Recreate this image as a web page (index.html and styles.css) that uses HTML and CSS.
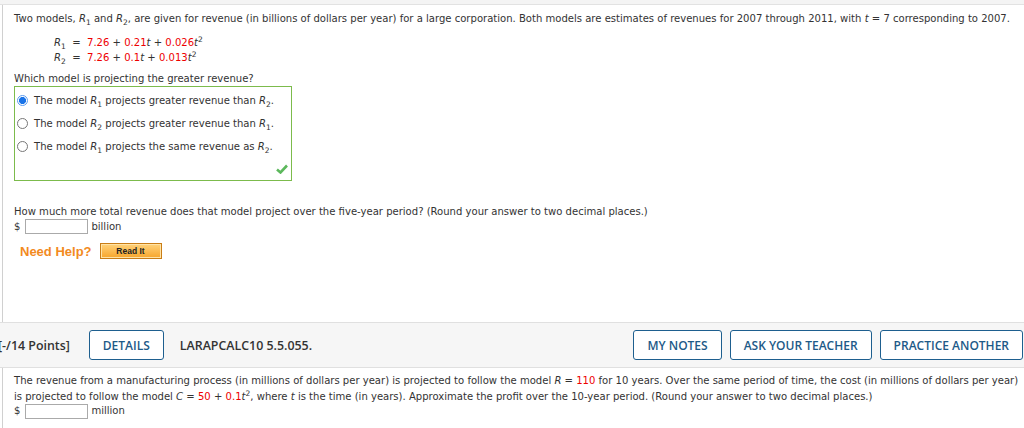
FILE: index.html
```html
<!DOCTYPE html>
<html>
<head>
<meta charset="utf-8">
<link rel="stylesheet" href="styles.css">
</head>
<body>
<div class="topstrip"></div>
<div class="question">
  <p class="intro">Two models, <i>R</i><sub>1</sub> and <i>R</i><sub>2</sub>, are given for revenue (in billions of dollars per year) for a large corporation. Both models are estimates of revenues for 2007 through 2011, with <i>t</i> = 7 corresponding to 2007.</p>
  <div class="eqs">
    <div class="eq"><i>R</i><sub>1</sub> &nbsp;=&nbsp; <span class="red">7.26</span> + <span class="red">0.21</span><i>t</i> + <span class="red">0.026</span><i>t</i><sup>2</sup></div>
    <div class="eq"><i>R</i><sub>2</sub> &nbsp;=&nbsp; <span class="red">7.26</span> + <span class="red">0.1</span><i>t</i> + <span class="red">0.013</span><i>t</i><sup>2</sup></div>
  </div>
  <p class="ask">Which model is projecting the greater revenue?</p>
  <div class="choices">
    <label class="choice"><span class="radio on"></span><span>The model <i>R</i><sub>1</sub> projects greater revenue than <i>R</i><sub>2</sub>.</span></label>
    <label class="choice"><span class="radio"></span><span>The model <i>R</i><sub>2</sub> projects greater revenue than <i>R</i><sub>1</sub>.</span></label>
    <label class="choice"><span class="radio"></span><span>The model <i>R</i><sub>1</sub> projects the same revenue as <i>R</i><sub>2</sub>.</span></label>
    <svg class="check" width="12" height="10" viewBox="0 0 12 10"><path d="M1 5.5 L4.5 8.5 L11 1.5" fill="none" stroke="#5cb85c" stroke-width="2.6"/></svg>
  </div>
  <p class="ask2">How much more total revenue does that model project over the five-year period? (Round your answer to two decimal places.)</p>
  <div class="answer"><span>$</span><span class="input"></span><span>billion</span></div>
  <div class="help"><span class="needhelp">Need Help?</span><span class="readit">Read It</span></div>
</div>
<div class="bar">
  <span class="points">[-/14 Points]</span>
  <span class="btn">DETAILS</span>
  <span class="code">LARAPCALC10 5.5.055.</span>
  <span class="spacer"></span>
  <span class="btn">MY NOTES</span>
  <span class="btn">ASK YOUR TEACHER</span>
  <span class="btn">PRACTICE ANOTHER</span>
</div>
<div class="question q2">
  <p class="intro">The revenue from a manufacturing process (in millions of dollars per year) is projected to follow the model <i>R</i> = <span class="red">110</span> for 10 years. Over the same period of time, the cost (in millions of dollars per year) is projected to follow the model <i>C</i> = <span class="red">50</span> + <span class="red">0.1</span><i>t</i><sup>2</sup>, where <i>t</i> is the time (in years). Approximate the profit over the 10-year period. (Round your answer to two decimal places.)</p>
  <div class="answer"><span>$</span><span class="input"></span><span>million</span></div>
</div>
</body>
</html>
```

FILE: styles.css
```css
body {
  margin: 0;
  font-family: "DejaVu Sans", Verdana, sans-serif;
  font-size: 10.05px;
  color: #333;
  background: #fff;
  overflow: hidden;
}
p { margin: 0; }
sub, sup { font-size: 75%; line-height: 0; }
.red { color: #e00; }
.topstrip {
  height: 4px;
  background: #f4f4f4;
  border-bottom: 1px solid #e2e2e2;
}
.question {
  margin-left: 2px;
  border-left: 1px solid #d0d0d0;
  padding: 6px 0 63px 11px;
  line-height: 15px;
}
.eqs { padding: 9px 0 0 40px; }
.eq { line-height: 15px; }
.ask { margin-top: 6px; }
.choices {
  position: relative;
  width: 278px;
  height: 95px;
  border: 1px solid #7cbb4c;
  margin-top: 0;
  padding-top: 6px;
  box-sizing: border-box;
}
.choice {
  display: flex;
  align-items: center;
  height: 15px;
  margin-bottom: 8px;
  padding-left: 1px;
}
.radio {
  width: 9px;
  height: 9px;
  border: 1px solid #777;
  border-radius: 50%;
  margin: 0 6px 0 1px;
  box-sizing: content-box;
  flex: none;
}
.radio.on {
  border-color: #5b9bf0;
  background: radial-gradient(circle, #1a73e8 0 3.3px, #fff 3.8px);
}
.check { position: absolute; right: 3px; bottom: 6px; }
.ask2 { margin-top: 23px; }
.answer { display: flex; align-items: center; margin-top: 0; }
.input {
  display: inline-block;
  width: 61px;
  height: 13px;
  border: 1px solid #aaa;
  margin: 0 3px 0 5px;
}
.help { display: flex; align-items: center; margin-top: 9px; padding-left: 6px; }
.needhelp {
  font-family: "Liberation Sans", Arial, sans-serif;
  font-weight: bold;
  font-size: 13px;
  color: #f28a1e;
  margin-right: 8px;
}
.readit {
  display: inline-block;
  width: 60px;
  height: 14px;
  line-height: 14px;
  text-align: center;
  font-family: "Liberation Sans", Arial, sans-serif;
  font-weight: bold;
  font-size: 8.5px;
  color: #222;
  background: linear-gradient(#ffd27a, #f7a52b);
  border: 1px solid #c97d16;
  box-shadow: inset 0 0 0 1px #ffe3a6;
}
.bar {
  display: flex;
  align-items: center;
  gap: 8px;
  height: 44px;
  background: #f6f6f6;
  border-top: 1px solid #e0e0e0;
  border-bottom: 1px solid #e0e0e0;
  font-family: "Open Sans", sans-serif;
  font-size: 12.4px;
  font-weight: 600;
  color: #333;
  padding-right: 1px;
}
.points { margin-left: -2px; margin-right: 11px; }
.code { margin-left: 8px; }
.spacer { flex: 1; }
.btn {
  display: inline-flex;
  align-items: center;
  height: 28px;
  padding: 0 13px;
  border: 1px solid #1e5f8f;
  border-radius: 3px;
  background: #fff;
  color: #1d5a88;
  font-size: 12px;
}
.q2 { padding-top: 5px; padding-bottom: 20px; line-height: 16px; }
.q2 .answer { margin-top: -2px; }
```
